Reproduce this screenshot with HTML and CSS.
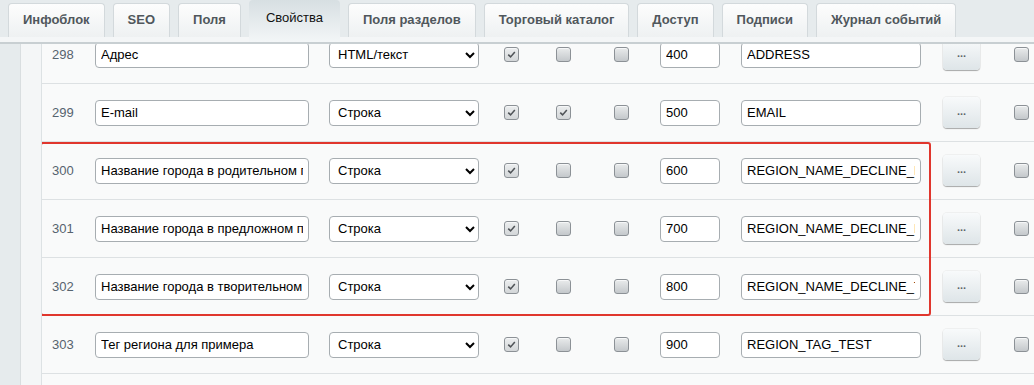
FILE: index.html
```html
<!DOCTYPE html>
<html>
<head>
  <title>Свойства инфоблока</title>
  <link rel="stylesheet" href="styles.css">
</head>
<body>

<div class="tabs">
  <span class="tab">Инфоблок</span>
  <span class="tab">SEO</span>
  <span class="tab">Поля</span>
  <span class="tab active">Свойства</span>
  <span class="tab">Поля разделов</span>
  <span class="tab">Торговый каталог</span>
  <span class="tab">Доступ</span>
  <span class="tab">Подписи</span>
  <span class="tab">Журнал событий</span>
</div>

<div class="main">
  <div class="gutter"></div>
  <div class="side"></div>
  <div class="rows">
    <div class="list">

      <div class="row">
        <span class="num">298</span>
        <span><input class="inp name" value="Адрес"></span>
        <span><select class="sel"><option>HTML/текст</option></select></span>
        <span class="cb on"><svg viewBox="0 0 14 14"><path d="M3.5 7.2 L6 9.6 L10.6 4.4"/></svg></span>
        <span class="cb"></span>
        <span class="cb"></span>
        <span><input class="inp sort" value="400"></span>
        <span><input class="inp code" value="ADDRESS"></span>
        <span><button class="more">...</button></span>
        <span class="cb"></span>
      </div>

      <div class="row">
        <span class="num">299</span>
        <span><input class="inp name" value="E-mail"></span>
        <span><select class="sel"><option>Строка</option></select></span>
        <span class="cb on"><svg viewBox="0 0 14 14"><path d="M3.5 7.2 L6 9.6 L10.6 4.4"/></svg></span>
        <span class="cb on"><svg viewBox="0 0 14 14"><path d="M3.5 7.2 L6 9.6 L10.6 4.4"/></svg></span>
        <span class="cb"></span>
        <span><input class="inp sort" value="500"></span>
        <span><input class="inp code" value="EMAIL"></span>
        <span><button class="more">...</button></span>
        <span class="cb"></span>
      </div>

      <div class="group">
        <div class="row">
          <span class="num">300</span>
          <span><input class="inp name" value="Название города в родительном падеже"></span>
          <span><select class="sel"><option>Строка</option></select></span>
          <span class="cb on"><svg viewBox="0 0 14 14"><path d="M3.5 7.2 L6 9.6 L10.6 4.4"/></svg></span>
          <span class="cb"></span>
          <span class="cb"></span>
          <span><input class="inp sort" value="600"></span>
          <span><input class="inp code" value="REGION_NAME_DECLINE_RP"></span>
          <span><button class="more">...</button></span>
          <span class="cb"></span>
        </div>

        <div class="row">
          <span class="num">301</span>
          <span><input class="inp name" value="Название города в предложном падеже"></span>
          <span><select class="sel"><option>Строка</option></select></span>
          <span class="cb on"><svg viewBox="0 0 14 14"><path d="M3.5 7.2 L6 9.6 L10.6 4.4"/></svg></span>
          <span class="cb"></span>
          <span class="cb"></span>
          <span><input class="inp sort" value="700"></span>
          <span><input class="inp code" value="REGION_NAME_DECLINE_PP"></span>
          <span><button class="more">...</button></span>
          <span class="cb"></span>
        </div>

        <div class="row">
          <span class="num">302</span>
          <span><input class="inp name" value="Название города в творительном падеже"></span>
          <span><select class="sel"><option>Строка</option></select></span>
          <span class="cb on"><svg viewBox="0 0 14 14"><path d="M3.5 7.2 L6 9.6 L10.6 4.4"/></svg></span>
          <span class="cb"></span>
          <span class="cb"></span>
          <span><input class="inp sort" value="800"></span>
          <span><input class="inp code" value="REGION_NAME_DECLINE_TP"></span>
          <span><button class="more">...</button></span>
          <span class="cb"></span>
        </div>
      </div>

      <div class="row">
        <span class="num">303</span>
        <span><input class="inp name" value="Тег региона для примера"></span>
        <span><select class="sel"><option>Строка</option></select></span>
        <span class="cb on"><svg viewBox="0 0 14 14"><path d="M3.5 7.2 L6 9.6 L10.6 4.4"/></svg></span>
        <span class="cb"></span>
        <span class="cb"></span>
        <span><input class="inp sort" value="900"></span>
        <span><input class="inp code" value="REGION_TAG_TEST"></span>
        <span><button class="more">...</button></span>
        <span class="cb"></span>
      </div>

      <div class="row"></div>

    </div>
  </div>
</div>

</body>
</html>
```

FILE: styles.css
```css
body{
  margin: 0;
  background: #f9fafa;
  font-family: "Liberation Sans", Arial, sans-serif;
  font-size: 13px;
  color: #000;
  overflow: hidden;
}

/* tabs */
.tabs{
  display: flex;
  gap: 8px;
  height: 42px;
  padding-left: 8px;
  background: linear-gradient(#e6ebed 37px, #f4f6f7 37px);
  border-bottom: 2px solid #c8cfd2;
}

.tab{
  margin-top: 3px;
  height: 34px;
  box-sizing: border-box;
  padding: 0 14px;
  border: 1px solid #d3d9dc;
  border-bottom: 0;
  border-radius: 4px 4px 0 0;
  background: linear-gradient(#fdfdfd, #eef1f2);
  line-height: 32px;
  font-weight: bold;
  color: #50575c;
  white-space: nowrap;
}

.tab.active{
  margin-top: 0;
  height: 42px;
  padding: 0 17px;
  border: 0;
  background: linear-gradient(#d7dfe2, #f3f6f7);
  line-height: 36px;
  font-weight: normal;
  color: #111;
}

/* body */
.main{
  display: flex;
  height: 341px;
}

.gutter{
  width: 20px;
  background: #e6ebed;
  border-right: 1px solid #d9dee0;
}

.side{
  width: 20px;
  background: #f4f6f7;
  border-right: 1px solid #dde2e4;
}

.rows{
  flex: 1;
  overflow: hidden;
}

.list{
  margin-top: -18px;
}

.row{
  display: grid;
  grid-template-columns: 53px 234px 175px 52px 58px 46px 81px 202px 71px 1fr;
  align-items: center;
  height: 57px;
  border-bottom: 1px solid #dde1e3;
}

.row > span{
  display: flex;
  align-items: center;
}

.group{
  position: relative;
}

.group::after{
  content: "";
  position: absolute;
  left: -2px;
  top: 0;
  bottom: 0;
  width: 891px;
  box-sizing: border-box;
  border: 2px solid #e0362d;
  border-radius: 3px;
  pointer-events: none;
}

.num{
  padding-left: 10px;
  color: #56636e;
}

/* fields */
.inp{
  box-sizing: border-box;
  height: 26px;
  padding: 0 5px;
  border: 1px solid #a7adb1;
  border-radius: 4px;
  background: #fff;
  font-family: inherit;
  font-size: 13px;
  color: #000;
  outline: none;
}

.name{ width: 214px; }
.sort{ width: 60px; }
.code{ width: 180px; }

.sel{
  box-sizing: border-box;
  width: 150px;
  height: 26px;
  padding: 0 4px;
  border: 1px solid #a7adb1;
  border-radius: 4px;
  background: #fff;
  font-family: inherit;
  font-size: 13px;
  color: #000;
}

.cb{
  box-sizing: border-box;
  width: 15px;
  height: 15px;
  border: 1px solid #8c9196;
  border-radius: 3px;
  background: linear-gradient(#e9ebec, #c4c8cb);
  box-shadow: inset 0 1px 0 #f6f7f8;
}

.cb.on{
  background: linear-gradient(#eceeef, #d3d6d8);
}

.cb svg{
  width: 13px;
  height: 13px;
  fill: none;
  stroke: #505458;
  stroke-width: 1.7;
}

.more{
  width: 37px;
  height: 31px;
  padding: 0 0 4px;
  border: 0;
  border-radius: 4px;
  background: linear-gradient(#f8fafb, #dee5e8);
  box-shadow: 0 1px 1px rgba(0,0,0,0.3), 0 0 0 1px rgba(0,0,0,0.04);
  font-family: inherit;
  font-size: 11px;
  font-weight: bold;
  color: #5f666b;
  letter-spacing: 0;
}
```
